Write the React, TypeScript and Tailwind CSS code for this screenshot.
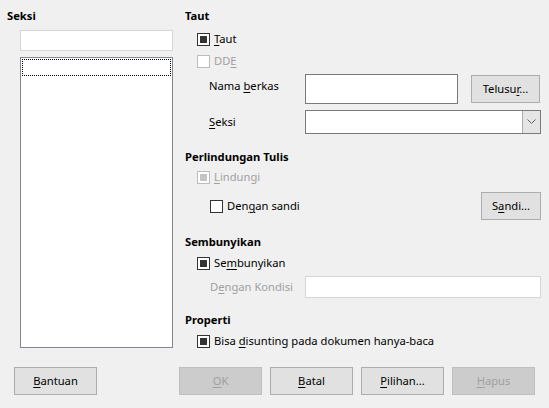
import React from "react";

const font = { fontFamily: '"Noto Sans", "Segoe UI", sans-serif' };

function Check({ checked, disabled }: { checked?: boolean; disabled?: boolean }) {
  return (
    <span
      className={`flex h-[13px] w-[13px] shrink-0 items-center justify-center border bg-white ${
        disabled ? "border-[#bcbcbc]" : "border-[#333333]"
      }`}
    >
      {checked && (
        <span className={`h-[7px] w-[7px] ${disabled ? "bg-[#c4c4c4]" : "bg-[#333333]"}`} />
      )}
    </span>
  );
}

function Label({ text, u, disabled }: { text: string; u: number; disabled?: boolean }) {
  return (
    <span className={disabled ? "text-[#a0a0a0]" : "text-black"}>
      {text.slice(0, u)}
      <u className="underline-offset-2">{text[u]}</u>
      {text.slice(u + 1)}
    </span>
  );
}

function Btn({
  text,
  u,
  disabled,
  className = "",
}: {
  text: string;
  u: number;
  disabled?: boolean;
  className?: string;
}) {
  return (
    <div
      className={`flex h-[28px] items-center justify-center border ${
        disabled ? "border-[#bfbfbf] bg-[#cccccc]" : "border-[#adadad] bg-[#e1e1e1]"
      } ${className}`}
    >
      <Label text={text} u={u} disabled={disabled} />
    </div>
  );
}

export default function App() {
  return (
    <div
      className="relative h-[408px] w-[549px] overflow-hidden bg-[#f0f0f0] text-[11.2px] leading-[16px] text-black"
      style={font}
    >
      <div className="flex">
        {/* left column */}
        <div className="w-[185px] shrink-0 pl-[7px] pt-[8px]">
          <div className="font-bold">Seksi</div>
          <div className="ml-[13px] mt-[6px] h-[21px] w-[153px] border border-[#d6d6d6] bg-white" />
          <div className="ml-[13px] mt-[6px] h-[291px] w-[153px] border border-[#828790] bg-white p-[1px]">
            <div className="h-[17px] border border-dotted border-black" />
          </div>
        </div>

        {/* right column */}
        <div className="w-[356px] pt-[8px]">
          <div className="font-bold">Taut</div>
          <div className="ml-[12px] mt-[7px] flex h-[16px] items-center gap-[4px]">
            <Check checked />
            <Label text="Taut" u={0} />
          </div>
          <div className="ml-[12px] mt-[6px] flex h-[16px] items-center gap-[4px]">
            <Check disabled />
            <Label text="DDE" u={2} disabled />
          </div>
          <div className="mt-[5px] flex h-[30px] items-start">
            <div className="w-[120px] pl-[24px] pt-[4px]">
              <Label text="Nama berkas" u={5} />
            </div>
            <div className="h-[30px] w-[153px] border border-[#7a7a7a] bg-white" />
            <Btn text="Telusur..." u={6} className="ml-[13px] mt-[1px] h-[27px] w-[69px]" />
          </div>
          <div className="mt-[6px] flex h-[24px] items-center">
            <div className="w-[120px] pl-[24px]">
              <Label text="Seksi" u={0} />
            </div>
            <div className="flex h-[24px] w-[236px] justify-end border border-[#7a7a7a] bg-white">
              <div className="flex w-[18px] items-center justify-center border-l border-[#acacac] bg-[#e5e5e5]">
                <svg width="9" height="6" viewBox="0 0 9 6">
                  <path d="M0.5 0.5 L4.5 4.5 L8.5 0.5" fill="none" stroke="#606060" strokeWidth="1" />
                </svg>
              </div>
            </div>
          </div>

          <div className="mt-[15px] font-bold">Perlindungan Tulis</div>
          <div className="ml-[12px] mt-[4px] flex h-[16px] items-center gap-[4px]">
            <Check checked disabled />
            <Label text="Lindungi" u={0} disabled />
          </div>
          <div className="mt-[7px] flex h-[28px] items-center justify-between">
            <div className="ml-[25px] flex items-center gap-[4px]">
              <Check />
              <Label text="Dengan sandi" u={3} />
            </div>
            <Btn text="Sandi..." u={1} className="w-[60px]" />
          </div>

          <div className="mt-[14px] font-bold">Sembunyikan</div>
          <div className="ml-[12px] mt-[5px] flex h-[16px] items-center gap-[4px]">
            <Check checked />
            <Label text="Sembunyikan" u={2} />
          </div>
          <div className="mt-[5px] flex h-[22px] items-center">
            <div className="w-[120px] pl-[25px]">
              <Label text="Dengan Kondisi" u={1} disabled />
            </div>
            <div className="h-[22px] w-[236px] border border-[#d6d6d6] bg-white" />
          </div>

          <div className="mt-[14px] font-bold">Properti</div>
          <div className="ml-[12px] mt-[5px] flex h-[16px] items-center gap-[4px]">
            <Check checked />
            <Label text="Bisa disunting pada dokumen hanya-baca" u={5} />
          </div>
        </div>
      </div>

      {/* bottom buttons */}
      <div className="mt-[18px] flex">
        <Btn text="Bantuan" u={0} className="ml-[14px] w-[83px]" />
        <div className="ml-[82px] flex gap-[8px]">
          <Btn text="OK" u={0} disabled className="w-[83px]" />
          <Btn text="Batal" u={0} className="w-[83px]" />
          <Btn text="Pilihan..." u={0} className="w-[83px]" />
          <Btn text="Hapus" u={0} disabled className="w-[83px]" />
        </div>
      </div>
    </div>
  );
}
